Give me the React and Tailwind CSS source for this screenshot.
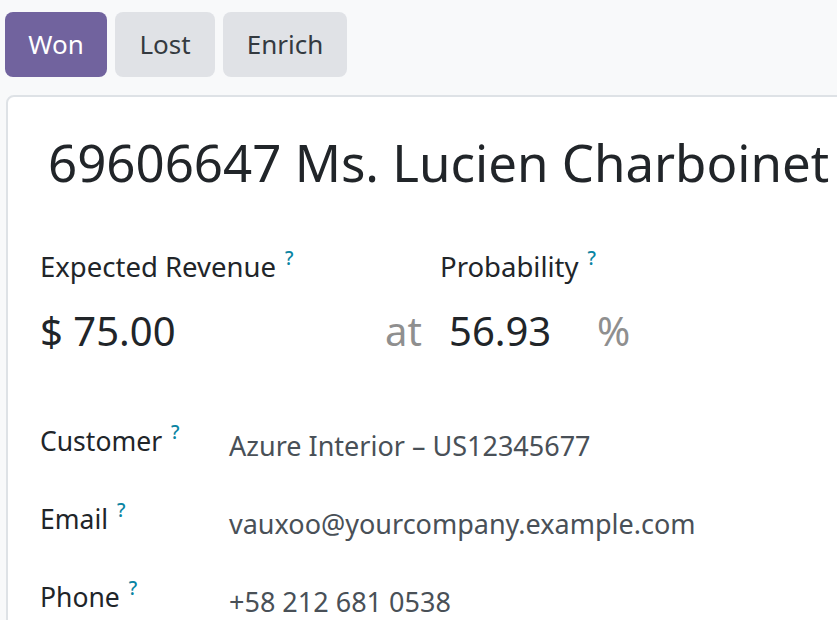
import React from "react";

const font = { fontFamily: '"Noto Sans", "Open Sans", sans-serif' };

function Help() {
  return (
    <span className="ml-[9px] text-[19px] font-medium text-[#0a84a3] relative top-[-12px]">?</span>
  );
}

function Field({ label, value }) {
  return (
    <div className="flex items-start h-[78px]">
      <div className="w-[189px] text-[26.5px] text-[#212529] leading-[36px] whitespace-nowrap">
        {label}
        <Help />
      </div>
      <div className="text-[27px] text-[#495057] leading-[36px] pt-[5px] whitespace-nowrap">{value}</div>
    </div>
  );
}

export default function App() {
  return (
    <div className="w-[837px] h-[620px] overflow-hidden bg-[#f8f9fa]" style={font}>
      <div className="flex gap-[8px] pl-[5px] pt-[12px]">
        <button className="h-[65px] w-[102px] rounded-[8px] bg-[#71639e] text-white text-[26px]">Won</button>
        <button className="h-[65px] w-[100px] rounded-[8px] bg-[#e0e2e6] text-[#343a40] text-[26px]">Lost</button>
        <button className="h-[65px] w-[124px] rounded-[8px] bg-[#e0e2e6] text-[#343a40] text-[26px]">Enrich</button>
      </div>

      <div className="ml-[6px] mt-[18px] w-[900px] h-[600px] bg-white border-2 border-[#dee2e6] rounded-tl-[8px] pl-[32px]">
        <h1 className="pl-[8px] pt-[35px] text-[51px] leading-[60px] text-[#212529] whitespace-nowrap">
          69606647 Ms. Lucien Charboinet
        </h1>

        <div className="mt-[57px] flex">
          <div className="w-[400px] text-[27.5px] text-[#212529] leading-[36px] whitespace-nowrap">
            Expected Revenue
            <Help />
          </div>
          <div className="text-[27.5px] text-[#212529] leading-[36px] whitespace-nowrap">
            Probability
            <Help />
          </div>
        </div>

        <div className="mt-[18px] flex items-baseline text-[40px] leading-[50px] text-[#212529]">
          <div className="w-[345px]">$ 75.00</div>
          <div className="w-[64px] text-[#8f8f8f]">at</div>
          <div className="w-[148px]">56.93</div>
          <div className="text-[#8f8f8f]">%</div>
        </div>

        <div className="mt-[67px]">
          <Field label="Customer" value="Azure Interior – US12345677" />
          <Field label="Email" value="vauxoo@yourcompany.example.com" />
          <Field label="Phone" value="+58 212 681 0538" />
        </div>
      </div>
    </div>
  );
}
